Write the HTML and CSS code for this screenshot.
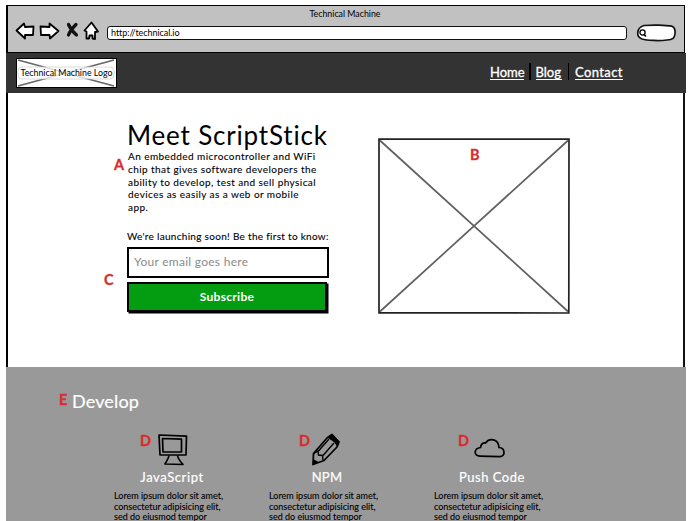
FILE: index.html
```html
<!DOCTYPE html>
<html lang="en">
<head>
<meta charset="utf-8">
<title>Technical Machine</title>
<link rel="stylesheet" href="styles.css">
</head>
<body>
<div class="window">
  <header class="chrome">
    <div class="window-title">Technical Machine</div>
    <div class="toolbar">
      <svg class="controls" viewBox="0 0 90 24" width="90" height="24">
        <g fill="#fff" stroke="#000" stroke-width="1.8" stroke-linejoin="round">
          <path d="M1.500 10.500 9 3.500 10 7 18.500 6.500 18 15 10 15 10 18.500Z"/>
          <path d="M25.500 6.500 34.500 7 34.500 3.500 43.500 11 35 18.500 34.500 15 26 15Z"/>
          <path d="M76.500 2.500 83 11.500 80 12 80 19 77.500 18.500 77.500 15.500 74.500 15.500 74 18.500 71.500 18.500 71.500 11.500 69.500 10.500Z"/>
        </g>
        <path d="M53.500 4.500C55 8 58 12 61.500 15M61 4.500C58.500 7 55 11 53.500 15" fill="none" stroke="#111" stroke-width="3.2" stroke-linecap="round"/>
      </svg>
      <div class="address">http://technical.io</div>
      <svg class="search" viewBox="0 0 41 18" width="41" height="18">
        <path d="M8 1.500C15 .8 30 .8 36 2.200 39 3.500 39.500 6 39 10 38.500 14 37 15.500 31 16 23 17 11 16.500 6 15 0 13 0 4 8 1.500Z" fill="#fff" stroke="#111" stroke-width="1.700"/>
        <circle cx="6.500" cy="8.500" r="2.600" fill="none" stroke="#000" stroke-width="1.300"/>
        <path d="M8 10.500 10 12.500" stroke="#000" stroke-width="1.600"/>
      </svg>
    </div>
  </header>
  <nav class="nav">
    <div class="logo">
      <svg class="logo-cross" viewBox="0 0 100 30" width="100" height="30">
        <path d="M2 2 98 28M98 2 2 28" stroke="#666" stroke-width="1.600"/>
        <rect x="2" y="9" width="96" height="12" rx="4" fill="#fff" fill-opacity=".78" stroke="#ccc" stroke-width=".7"/>
      </svg>
      <span class="logo-text">Technical Machine Logo</span>
    </div>
    <div class="links">
      <a class="home">Home</a><i></i><a class="blog">Blog</a><i></i><a class="contact">Contact</a>
    </div>
  </nav>
  <main class="hero">
    <section class="pitch">
      <h1>Meet ScriptStick</h1>
      <p class="intro">An embedded microcontroller and WiFi<br>chip that gives software developers the<br>ability to develop, test and sell physical<br>devices as easily as a web or mobile<br>app.</p>
      <p class="launch">We're launching soon! Be the first to know:</p>
      <div class="email">Your email goes here</div>
      <div class="subscribe">Subscribe</div>
      <b class="mark mark-a">A</b>
      <b class="mark mark-c">C</b>
    </section>
    <figure class="picture">
      <svg viewBox="0 0 192 176" width="192" height="176">
        <path d="M2 2.500 190 173.500M190 2.500 2 173.500" stroke="#606060" stroke-width="1.700"/>
        <path d="M1 1 191 1.200 190.800 175 1 174.800Z" fill="none" stroke="#222" stroke-width="1.700"/>
      </svg>
      <b class="mark mark-b">B</b>
    </figure>
  </main>
  <section class="develop">
    <h2>Develop</h2>
    <b class="mark mark-e">E</b>
    <div class="features">
      <article>
        <svg class="icon" viewBox="0 0 34 34" width="34" height="34" fill="none" stroke="#000" stroke-width="1.700" stroke-linejoin="round">
          <path d="M3 2 30.500 3.200 30 22 4 22Z"/><path d="M6.500 5.500 25.500 6.200 25.500 18.800 7 19Z"/><path d="M13 22.500C12.500 26 10.500 28 9 31L27 31.500C24 28 22 26 21.500 22.500"/>
        </svg>
        <b class="mark mark-d1">D</b>
        <h3 class="js">JavaScript</h3>
        <p>Lorem ipsum dolor sit amet,<br>consectetur adipisicing elit,<br>sed do eiusmod tempor</p>
      </article>
      <article>
        <svg class="icon pencil" viewBox="0 0 34 34" width="34" height="34">
          <path d="M3 31.500 3.500 20.500 17 5 22 1.500 29 9 27 14 14 27.500Z" fill="none" stroke="#000" stroke-width="1.800" stroke-linejoin="round"/>
          <path d="M17.500 4.500 22 1 29.500 8.500 27 13.500 24.500 9.500Z" fill="#000"/>
          <path d="M8 18.500 19 6M13 22.500 24 10M4 20.500 8 18 8.500 22 12.500 22.500 13 27" fill="none" stroke="#000" stroke-width="1.400"/>
          <path d="M3 32 3.300 26 8.500 29Z"/>
        </svg>
        <b class="mark mark-d2">D</b>
        <h3 class="npm">NPM</h3>
        <p>Lorem ipsum dolor sit amet,<br>consectetur adipisicing elit,<br>sed do eiusmod tempor</p>
      </article>
      <article>
        <svg class="icon cloud" viewBox="0 0 34 34" width="34" height="34" fill="none" stroke="#000" stroke-width="1.700">
          <path d="M7 23.200C.5 23 .5 15.500 7.500 14.500 8 11 10 9.500 12.500 10 16 4.500 25.500 5.500 26 14.500 32.500 15 32.500 23.500 27 23.700Z"/>
        </svg>
        <b class="mark mark-d3">D</b>
        <h3 class="push">Push Code</h3>
        <p>Lorem ipsum dolor sit amet,<br>consectetur adipisicing elit,<br>sed do eiusmod tempor</p>
      </article>
    </div>
  </section>
</div>
</body>
</html>
```

FILE: styles.css
```css
* { box-sizing: border-box; }
body { margin: 0; padding: 5px 8px 0 6px; height: 521px; overflow: hidden; background: #fff; color: #000; font-family: Lato, "Liberation Sans", sans-serif; font-variant-ligatures: none; }
h1, h2, h3, p, figure { margin: 0; font-weight: 400; white-space: nowrap; }
svg { display: block; }
.window { width: 680px; height: 516px; }
.chrome { height: 48px; width: 679px; border: 1.5px solid #000; border-left-width: 2px; background: #c1c1c1; }
.window-title { height: 12px; padding: 2px 2px 0 0; text-align: center; font-size: 8.8px; line-height: 11px; }
.toolbar { display: flex; padding: 2px 0 0 7px; }
.address { width: 520px; height: 14px; margin: 6px 0 0 2px; padding-left: 3px; border: 1.5px solid #111; border-radius: 3px; background: #fff; font-size: 9px; line-height: 11px; letter-spacing: -.05px; }
.search { margin: 4px 0 0 9px; }
.nav { display: flex; height: 40px; width: 680px; padding: 5px 0 0 10px; background: #333; }
.logo { display: grid; width: 101px; height: 30px; background: #fff; outline: 1px solid #000; outline-offset: -1px; align-items: center; }
.logo-cross, .logo-text { grid-area: 1 / 1; }
.logo-text { z-index: 1; font-size: 8.8px; text-align: center; white-space: nowrap; padding-bottom: 1px; }
.links { display: flex; margin-left: 373px; padding-top: 5px; color: #fff; font-size: 13px; line-height: 18px; }
.links a { height: 17px; border-bottom: 1px solid #fff; line-height: 18px; -webkit-text-stroke: .3px #fff; white-space: nowrap; }
.links i { width: 1.5px; height: 17px; margin: 0 5px; background: #000; }
.home { width: 34px; }
.blog { width: 26px; margin-right: 1px; }
.contact { width: 48px; letter-spacing: .4px; margin-left: 1px; }
.hero { display: flex; height: 274px; width: 679px; padding-left: 119px; border-left: 2px solid #000; border-right: 2px solid #111; }
.pitch { position: relative; width: 202px; padding-top: 27px; }
h1 { font-size: 26px; line-height: 30px; height: 30px; letter-spacing: .82px; }
.intro { padding-left: 1px; font-size: 10px; line-height: 12.750px; letter-spacing: .43px; -webkit-text-stroke: .1px #000; }
.launch { margin-top: 15px; font-size: 10px; line-height: 14px; letter-spacing: .3px; -webkit-text-stroke: .1px #000; }
.email { height: 31px; margin-top: 4px; padding-left: 5px; border: 2px solid #000; color: #8a8a8a; font-size: 12px; line-height: 26px; letter-spacing: .27px; }
.subscribe { height: 30px; width: 200px; margin-top: 4px; border: 2px solid #000; box-shadow: 1.5px 1.5px #000; background: #049d12; color: #fff; text-align: center; font-size: 12px; line-height: 26px; font-weight: 700; letter-spacing: .3px; }
.picture { position: relative; margin: 45px 0 0 49px; }
.mark { position: absolute; color: #d92c2c; font-size: 14.5px; line-height: 16px; -webkit-text-stroke: .3px #d92c2c; }
.mark-a { left: -13px; top: 64px; }
.mark-c { left: -23px; top: 179px; }
.mark-b { left: 92px; top: 9px; }
.develop { position: relative; width: 680px; height: 154px; padding: 22px 0 0 66px; background: #999; }
h2 { color: #fff; font-size: 18px; line-height: 24px; letter-spacing: .15px; -webkit-text-stroke: .2px #fff; }
.mark-e { left: 53px; top: 25px; }
.features { display: flex; padding: 20px 0 0 42px; }
article { position: relative; width: 155px; }
article + article + article { margin-left: 10px; }
.icon { margin-left: 42px; }
.pencil { margin-left: 41px; }
.cloud { margin-left: 39px; }
h3 { width: 116px; color: #fff; text-align: center; font-size: 13px; line-height: 20px; letter-spacing: .3px; -webkit-text-stroke: .2px #fff; }
.js { letter-spacing: .6px; }
.push { letter-spacing: .5px; }
article p { margin-top: 4px; font-size: 9px; line-height: 10.500px; -webkit-text-stroke: .1px #000; }
.mark-d1 { left: 26px; top: 0; }
.mark-d2 { left: 30px; top: 0; }
.mark-d3 { left: 24px; top: 0; }
```
